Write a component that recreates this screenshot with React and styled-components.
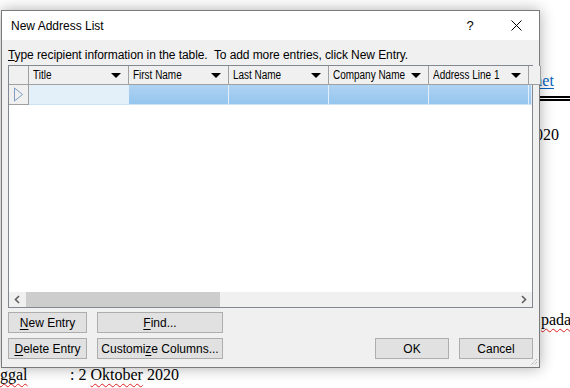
import styled, { createGlobalStyle } from "styled-components"

const GlobalStyle = createGlobalStyle`
  body {
    margin: 0;
    background: #fff;
    overflow: hidden;
  }
`

const UI_FONT = `"Liberation Sans", Arial, sans-serif`

const Page = styled.div`
  position: relative;
  width: 570px;
  height: 388px;
  background: #fff;
  font-family: "Liberation Serif", "Times New Roman", serif;
  overflow: hidden;
`

// bits of the Word document peeking out behind the dialog
const DocText = styled.span`
  position: absolute;
  left: ${({ x }) => x}px;
  top: ${({ y }) => y}px;
  font-size: 16px;
  line-height: 18px;
  color: ${({ link }) => (link ? "#0563c1" : "#000")};
  text-decoration: ${({ link, typo }) =>
    link ? "underline" : typo ? "underline wavy #e02020" : "none"};
  text-decoration-thickness: 1px;
  text-underline-offset: ${({ typo }) => (typo ? "3px" : "2px")};
  white-space: pre;
`

const Typo = styled.span`
  text-decoration: underline wavy #e02020;
  text-decoration-thickness: 1px;
  text-underline-offset: 3px;
`

const DocRule = styled.div`
  position: absolute;
  left: 530px;
  top: 96px;
  width: 40px;
  height: 1px;
  border-top: 2px solid #000;
  border-bottom: 2px solid #000;
`

const Dialog = styled.div`
  position: absolute;
  left: 1px;
  top: 10px;
  width: 537px;
  height: 356px;
  border: 1px solid #7a7a7a;
  background: #f0f0f0;
  box-shadow: 0 0 14px rgba(0, 0, 0, 0.32);
  display: flex;
  flex-direction: column;
  font-family: ${UI_FONT};
  font-size: 12px;
  color: #000;
`

const TitleBar = styled.div`
  height: 29px;
  background: #fff;
  display: flex;
  align-items: center;
  padding-left: 9px;
`

const Title = styled.div`
  flex: 1;
  font-size: 12px;
  padding-top: 1px;
`

const CaptionButton = styled.div`
  width: 46px;
  height: 29px;
  display: flex;
  align-items: center;
  justify-content: center;
  font-size: 13px;
  color: #000;
`

const Body = styled.div`
  flex: 1;
  display: flex;
  flex-direction: column;
  padding: 8px 6px 7px 6px;
`

const Hint = styled.div`
  height: 14px;
  line-height: 14px;
  margin-bottom: 3px;
  letter-spacing: -0.08px;
`

const Grid = styled.div`
  height: 241px;
  border: 1px solid #828790;
  background: #fff;
  display: flex;
  flex-direction: column;
`

const Row = styled.div`
  display: grid;
  grid-template-columns: 20px repeat(5, 100px) 1fr;
  height: ${({ h }) => h}px;
`

const HeadCell = styled.div`
  background: #f0f0f0;
  border-right: 1px solid #a0a0a0;
  border-bottom: 1px solid #a0a0a0;
  display: flex;
  align-items: center;
  padding-left: 4px;
  padding-right: 7px;
  gap: 4px;
  white-space: nowrap;
  overflow: hidden;
`

// header captions use a condensed face in the original; squeeze Arial-metric text to match
const HeadLabel = styled.span`
  flex: 1;
  min-width: 0;
  display: inline-block;
  transform: scaleX(0.83);
  transform-origin: left center;
  font-size: 12px;
`

const SortArrow = styled.span`
  flex: none;
  width: 0;
  height: 0;
  border-left: 5px solid transparent;
  border-right: 5px solid transparent;
  border-top: 5px solid #000;
`

const Cell = styled.div`
  background: ${({ tone }) =>
    tone === "header"
      ? "#f0f0f0"
      : tone === "current"
      ? "#e3eff9"
      : "linear-gradient(#aed3f3, #95c5ee)"};
  border-right: 1px solid
    ${({ tone }) => (tone === "header" ? "#a0a0a0" : "#e2eef9")};
  border-bottom: 1px solid
    ${({ tone }) => (tone === "header" ? "#a0a0a0" : "#cfe2f3")};
  display: flex;
  align-items: center;
  justify-content: center;
`

const Empty = styled.div`
  flex: 1;
  background: #fff;
`

const HScroll = styled.div`
  height: 15px;
  background: #f0f0f0;
  display: flex;
  align-items: center;
`

const ScrollArrow = styled.div`
  width: 17px;
  height: 15px;
  display: flex;
  align-items: center;
  justify-content: center;
`

const Thumb = styled.div`
  width: 194px;
  height: 15px;
  background: #cdcdcd;
`

const Track = styled.div`
  flex: 1;
`

const Footer = styled.div`
  display: flex;
  justify-content: space-between;
  align-items: flex-end;
  padding-top: 4px;
`

const LeftButtons = styled.div`
  display: grid;
  grid-template-columns: 79px 126px;
  column-gap: 10px;
  row-gap: 5px;
`

const RightButtons = styled.div`
  display: flex;
  gap: 10px;
`

const Button = styled.div`
  width: ${({ w }) => (w ? `${w}px` : "auto")};
  height: 21px;
  box-sizing: border-box;
  background: #e1e1e1;
  border: 1px solid #adadad;
  display: flex;
  align-items: center;
  justify-content: center;
  font-size: 12px;
  white-space: nowrap;

  u {
    text-decoration: underline;
    text-underline-offset: 2px;
  }
`

const Grip = styled.svg`
  position: absolute;
  right: 1px;
  bottom: 1px;
`

const columns = ["Title", "First Name", "Last Name", "Company Name", "Address Line 1"]

function App() {
  return (
    <>
      <GlobalStyle />
      <Page>
        <DocText x={529} y={72} link>
          Inet
        </DocText>
        <DocRule />
        <DocText x={527} y={126}>
          2020
        </DocText>
        <DocText x={541} y={311} typo>
          pada
        </DocText>
        <DocText x={-8} y={366} typo>
          nggal
        </DocText>
        <DocText x={70} y={366}>
          : 2 <Typo>Oktober</Typo> 2020
        </DocText>

        <Dialog>
          <TitleBar>
            <Title>New Address List</Title>
            <CaptionButton>?</CaptionButton>
            <CaptionButton>
              <svg width="11" height="11" viewBox="0 0 11 11">
                <path d="M0.5 0.5 L10.5 10.5 M10.5 0.5 L0.5 10.5" stroke="#000" strokeWidth="1" />
              </svg>
            </CaptionButton>
          </TitleBar>

          <Body>
            <Hint>
              <u>T</u>ype recipient information in the table.&nbsp; To add more entries, click New Entry.
            </Hint>

            <Grid>
              <Row h={19}>
                <Cell tone="header" />
                {columns.map((c) => (
                  <HeadCell key={c}>
                    <HeadLabel>{c}</HeadLabel>
                    <SortArrow />
                  </HeadCell>
                ))}
                <HeadCell />
              </Row>
              <Row h={20}>
                <Cell tone="header">
                  <svg width="11" height="15" viewBox="0 0 11 15">
                    <path d="M1.5 1 L9.5 7.5 L1.5 14 Z" fill="none" stroke="#7f9cc4" strokeWidth="1" />
                  </svg>
                </Cell>
                <Cell tone="current" />
                {columns.slice(1).map((c) => (
                  <Cell key={c} />
                ))}
                <Cell />
              </Row>
              <Empty />
              <HScroll>
                <ScrollArrow>
                  <svg width="7" height="9" viewBox="0 0 7 9">
                    <path d="M5 1 L1.5 4.5 L5 8" fill="none" stroke="#606060" strokeWidth="1.6" />
                  </svg>
                </ScrollArrow>
                <Thumb />
                <Track />
                <ScrollArrow>
                  <svg width="7" height="9" viewBox="0 0 7 9">
                    <path d="M2 1 L5.5 4.5 L2 8" fill="none" stroke="#606060" strokeWidth="1.6" />
                  </svg>
                </ScrollArrow>
              </HScroll>
            </Grid>

            <Footer>
              <LeftButtons>
                <Button>
                  <u>N</u>ew Entry
                </Button>
                <Button>
                  <u>F</u>ind...
                </Button>
                <Button>
                  <u>D</u>elete Entry
                </Button>
                <Button>
                  Customi<u>z</u>e Columns...
                </Button>
              </LeftButtons>
              <RightButtons>
                <Button w={74}>OK</Button>
                <Button w={74}>Cancel</Button>
              </RightButtons>
            </Footer>
          </Body>

          <Grip width="9" height="9" viewBox="0 0 9 9">
            <path d="M8 2 L2 8 M8 5 L5 8" stroke="#a0a0a0" strokeWidth="1" strokeDasharray="1 1" />
          </Grip>
        </Dialog>
      </Page>
    </>
  )
}

export default App
